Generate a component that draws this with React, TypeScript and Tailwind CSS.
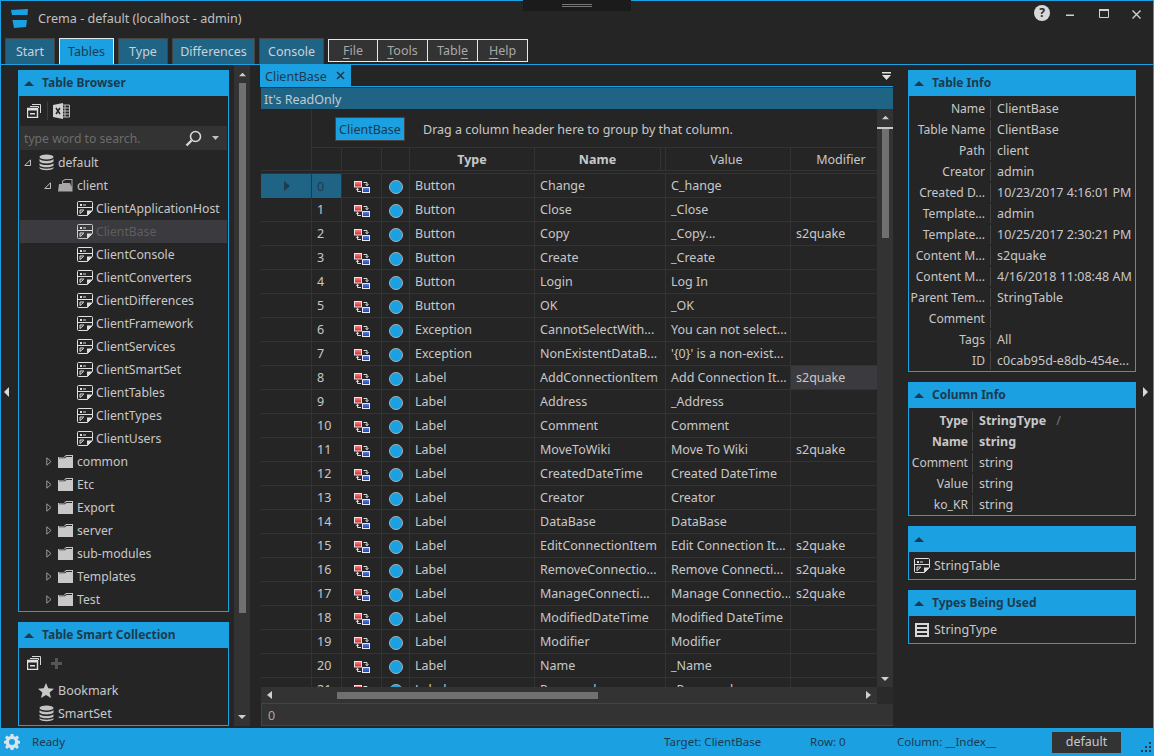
import React from "react";

const FONT = "font-['Noto_Sans','Open_Sans',sans-serif]";

const Logo = () => (
  <svg width="18" height="20" viewBox="0 0 18 20" className="shrink-0">
    <path d="M0 1 L17 0 L16.5 6 L1 6 Z" fill="#1ba1e2" />
    <path d="M1.5 11 L16 11 L15 18 L3 19 Z" fill="#1ba1e2" />
  </svg>
);

const Db = () => (
  <svg width="15" height="17" viewBox="0 0 15 17" className="shrink-0">
    <ellipse cx="7.5" cy="3" rx="7" ry="2.6" fill="#c4c4c4" />
    <path d="M0.5 5 C2 7.6 13 7.6 14.5 5 V7.5 C13 10 2 10 0.5 7.5 Z" fill="#c4c4c4" />
    <path d="M0.5 9.2 C2 11.6 13 11.6 14.5 9.2 V11.4 C13 13.8 2 13.8 0.5 11.4 Z" fill="#c4c4c4" />
    <path d="M0.5 13 C2 15.2 13 15.2 14.5 13 V14.2 C13 16.8 2 16.8 0.5 14.2 Z" fill="#c4c4c4" />
  </svg>
);

const FolderClosed = () => (
  <svg width="15" height="13" viewBox="0 0 15 13" className="shrink-0">
    <path d="M0 2 H6 L8 0 H15 V13 H0 Z" fill="#c8c8c8" />
    <path d="M1 2.6 H6.4 L8.4 1 H14 V2 H8.4 L7 3.2 H1 Z" fill="#252526" />
  </svg>
);

const FolderOpen = () => (
  <svg width="15" height="13" viewBox="0 0 15 13" className="shrink-0">
    <path d="M4 2 L7 0 H14.5 V12.5 H0 L1 5 H4 Z" fill="#a8a8a8" />
    <path d="M5 2.4 L7.3 1 H13.5 V8 L12 4 H5 Z" fill="#252526" />
  </svg>
);

const TableIcon = ({ dim = false }: { dim?: boolean }) => (
  <svg width="16" height="15" viewBox="0 0 16 15" className="shrink-0">
    <path d="M1.5 0.5 H14.5 Q15.5 0.5 15.5 1.5 V9.5 L10.5 14.5 H1.5 Q0.5 14.5 0.5 13.5 V1.5 Q0.5 0.5 1.5 0.5 Z" fill="none" stroke={dim ? "#c8c8c8" : "#e0e0e0"} />
    <path d="M3 3 H5 V5 H3 Z M6 3.5 H9 V4.5 H6 Z" fill="#e0e0e0" />
    <path d="M1 6.5 H15" stroke="#e0e0e0" />
    <path d="M3 9 H7 M3 9 V12.5 M3 12.5 L6.5 9.5" stroke="#e0e0e0" fill="none" />
    <path d="M10 14.5 L15.5 9.5 H10 Z" fill="#e0e0e0" />
  </svg>
);

const ExpandOpen = () => (
  <svg width="7" height="7" viewBox="0 0 7 7" className="shrink-0">
    <path d="M6.5 0.8 V6.5 H0.8 Z" fill="none" stroke="#c0c0c0" />
  </svg>
);

const ExpandClosed = () => (
  <svg width="6" height="9" viewBox="0 0 6 9" className="shrink-0">
    <path d="M0.8 0.8 L5 4.5 L0.8 8.2 Z" fill="none" stroke="#9a9a9a" />
  </svg>
);

const Up = ({ dark = false, w = 10 }: { dark?: boolean; w?: number }) => (
  <svg width={w} height="5" viewBox="0 0 10 5" className="shrink-0">
    <path d="M5 0 L10 5 H0 Z" fill={dark ? "#1d3a4e" : "#d0d0d0"} />
  </svg>
);

const Down = () => (
  <svg width="8" height="4" viewBox="0 0 8 4" className="shrink-0">
    <path d="M0 0 H8 L4 4 Z" fill="#d0d0d0" />
  </svg>
);

const CopyIcon = () => (
  <svg width="14" height="14" viewBox="0 0 14 14" className="shrink-0">
    <path d="M5 0.5 H13.5 V9 M3 2.5 H11.5 V4" fill="none" stroke="#d8d8d8" />
    <path d="M0.5 4.5 H10.5 V13.5 H0.5 Z" fill="none" stroke="#e0e0e0" strokeWidth="1.4" />
    <path d="M0 4 H11 V6.5 H0 Z" fill="#e0e0e0" />
    <path d="M3 9 H8 V10.5 H3 Z" fill="#e0e0e0" />
  </svg>
);

const ExcelIcon = () => (
  <svg width="17" height="16" viewBox="0 0 17 16" className="shrink-0">
    <path d="M8 2 H16.5 V14 H8 Z" fill="none" stroke="#bdbdbd" />
    <path d="M9 5 H16 M9 8 H16 M9 11 H16 M12 2 V14" stroke="#bdbdbd" />
    <path d="M0 2 L10 0 V16 L0 14 Z" fill="#d0d0d0" />
    <path d="M3 5 L7 11 M7 5 L3 11" stroke="#252526" strokeWidth="1.5" />
  </svg>
);

const SearchIcon = () => (
  <svg width="17" height="17" viewBox="0 0 17 17" className="shrink-0">
    <circle cx="10.5" cy="6.5" r="5" fill="none" stroke="#d8d8d8" strokeWidth="1.6" />
    <path d="M6.5 10.5 L1.5 15.5" stroke="#d8d8d8" strokeWidth="2.4" />
  </svg>
);

const StarIcon = () => (
  <svg width="16" height="15" viewBox="0 0 16 15" className="shrink-0">
    <path d="M8 0 L10.2 5.2 L16 5.7 L11.6 9.4 L13 15 L8 12 L3 15 L4.4 9.4 L0 5.7 L5.8 5.2 Z" fill="#c8c8c8" />
  </svg>
);

const ListIcon = () => (
  <svg width="14" height="14" viewBox="0 0 14 14" className="shrink-0">
    <path d="M0 0 H14 V14 H0 Z M2 2 V4 H12 V2 Z M2 6 V8 H12 V6 Z M2 10 V12 H12 V10 Z" fill="#d8d8d8" fillRule="evenodd" />
  </svg>
);

const Gear = () => (
  <svg width="16" height="16" viewBox="0 0 16 16" className="shrink-0">
    <path
      fillRule="evenodd"
      fill="#d6e4ec"
      d="M6.6 0 H9.4 L9.8 2.2 L11.3 2.8 L13.1 1.5 L15 3.4 L13.6 5.2 L14.2 6.6 L16 7 V9.4 L14.2 9.8 L13.6 11.3 L14.9 13.1 L13 15 L11.2 13.6 L9.8 14.2 L9.4 16 H6.6 L6.2 14.2 L4.8 13.6 L3 15 L1.1 13.1 L2.4 11.3 L1.8 9.8 L0 9.4 V7 L1.8 6.6 L2.4 5.2 L1 3.4 L2.9 1.5 L4.7 2.8 L6.2 2.2 Z M8 5 A3 3 0 1 0 8 11 A3 3 0 1 0 8 5 Z"
    />
  </svg>
);

const ChangeIcon = () => (
  <svg width="16" height="12" viewBox="0 0 16 12" className="shrink-0">
    <defs>
      <linearGradient id="r" x1="0" y1="0" x2="0" y2="1">
        <stop offset="0" stopColor="#f58a8a" />
        <stop offset="1" stopColor="#d8202a" />
      </linearGradient>
      <linearGradient id="b" x1="0" y1="0" x2="0" y2="1">
        <stop offset="0" stopColor="#5a86e0" />
        <stop offset="1" stopColor="#1f3fb8" />
      </linearGradient>
    </defs>
    <rect x="0.5" y="0.5" width="7" height="5.5" fill="url(#r)" stroke="#e8e8e8" />
    <rect x="8.5" y="6.5" width="7" height="5" fill="url(#b)" stroke="#e8e8e8" />
    <path d="M9.5 1.5 H13 V4.5 M11.6 3.2 L13 4.8 L14.4 3.2" fill="none" stroke="#e0e0e0" />
    <path d="M7 10.5 H3.5 V7.5 M2.1 8.8 L3.5 7.2 L4.9 8.8" fill="none" stroke="#e0e0e0" />
  </svg>
);

const Panel = ({ title, children, className = "" }: { title: string; children: React.ReactNode; className?: string }) => (
  <section className={`border border-[#1ba1e2] flex flex-col shrink-0 ${className}`}>
    <div className="h-[26px] -mt-px -mx-px bg-[#1ba1e2] flex items-center pl-[6px] gap-[8px] shrink-0">
      <Up dark />
      <span className="font-bold text-[#1d3a4e] text-[12px]">{title}</span>
    </div>
    {children}
  </section>
);

const TreeItem = ({
  indent,
  expW = 12,
  exp,
  icon,
  label,
  selected,
}: {
  indent: number;
  expW?: number;
  exp?: React.ReactNode;
  icon: React.ReactNode;
  label: string;
  selected?: boolean;
}) => (
  <div
    className={`h-[23px] flex items-center ${selected ? "bg-[#3a3a3f] text-[#5e5e5e]" : ""}`}
    style={{ paddingLeft: indent }}
  >
    <span className="shrink-0 flex items-center" style={{ width: expW }}>{exp}</span>
    <span className="w-[19px] shrink-0 flex items-center">{icon}</span>
    <span className="whitespace-nowrap pt-[2px] text-[12.2px]">{label}</span>
  </div>
);

const tableNames = [
  "ClientApplicationHost",
  "ClientBase",
  "ClientConsole",
  "ClientConverters",
  "ClientDifferences",
  "ClientFramework",
  "ClientServices",
  "ClientSmartSet",
  "ClientTables",
  "ClientTypes",
  "ClientUsers",
];
const folders = ["common", "Etc", "Export", "server", "sub-modules", "Templates", "Test"];

const rows: [string, string, string, string][] = [
  ["Button", "Change", "C_hange", ""],
  ["Button", "Close", "_Close", ""],
  ["Button", "Copy", "_Copy...", "s2quake"],
  ["Button", "Create", "_Create", ""],
  ["Button", "Login", "Log In", ""],
  ["Button", "OK", "_OK", ""],
  ["Exception", "CannotSelectWith...", "You can not select...", ""],
  ["Exception", "NonExistentDataB...", "'{0}' is a non-exist...", ""],
  ["Label", "AddConnectionItem", "Add Connection It...", "s2quake"],
  ["Label", "Address", "_Address", ""],
  ["Label", "Comment", "Comment", ""],
  ["Label", "MoveToWiki", "Move To Wiki", "s2quake"],
  ["Label", "CreatedDateTime", "Created DateTime", ""],
  ["Label", "Creator", "Creator", ""],
  ["Label", "DataBase", "DataBase", ""],
  ["Label", "EditConnectionItem", "Edit Connection It...", "s2quake"],
  ["Label", "RemoveConnectio...", "Remove Connecti...", "s2quake"],
  ["Label", "ManageConnecti...", "Manage Connectio...", "s2quake"],
  ["Label", "ModifiedDateTime", "Modified DateTime", ""],
  ["Label", "Modifier", "Modifier", ""],
  ["Label", "Name", "_Name", ""],
  ["Label", "Password", "_Password", ""],
];

const tableInfo: [string, string][] = [
  ["Name", "ClientBase"],
  ["Table Name", "ClientBase"],
  ["Path", "client"],
  ["Creator", "admin"],
  ["Created D...", "10/23/2017 4:16:01 PM"],
  ["Template...", "admin"],
  ["Template...", "10/25/2017 2:30:21 PM"],
  ["Content M...", "s2quake"],
  ["Content M...", "4/16/2018 11:08:48 AM"],
  ["Parent Tem...", "StringTable"],
  ["Comment", ""],
  ["Tags", "All"],
  ["ID", "c0cab95d-e8db-454e..."],
];

const columnInfo: [string, string, boolean][] = [
  ["Type", "StringType", true],
  ["Name", "string", true],
  ["Comment", "string", false],
  ["Value", "string", false],
  ["ko_KR", "string", false],
];

const Underlined = ({ pre, u, post }: { pre: string; u: string; post: string }) => (
  <span className="whitespace-nowrap">
    {pre}
    <span className="underline underline-offset-[3px]">{u}</span>
    {post}
  </span>
);

export default function App() {
  return (
    <div className={`${FONT} relative w-[1154px] h-[756px] overflow-hidden bg-[#252526] text-[12.5px] leading-none text-[#c8c8c8] flex flex-col`}>
      <div className="absolute left-[523px] top-0 w-[108px] h-[11px] bg-[#1b1b1b] flex flex-col items-center pt-[4px] gap-px z-10">
        <div className="w-[30px] h-px bg-[#777]" />
        <div className="w-[30px] h-px bg-[#777]" />
      </div>

      <div className="h-px bg-[#1ba1e2] shrink-0" />

      <div className="flex-1 min-h-0 flex flex-col border-x border-[#1ba1e2]">
        {/* title bar */}
        <header className="h-[37px] shrink-0 flex items-center pl-[10px]">
          <span className="mb-[2px]"><Logo /></span>
          <span className="ml-[9px] text-[12.6px] text-[#c0c0c0] whitespace-nowrap">Crema - default (localhost - admin)</span>
          <div className="ml-auto flex items-start self-start mt-[4px] mr-[12px]">
            <span className="w-[16px] h-[16px] rounded-full bg-[#d8d8d8] text-[#2a2a2a] text-[12px] font-bold flex items-center justify-center">?</span>
            <svg width="9" height="9" viewBox="0 0 9 9" className="ml-[16px] mt-[2px]"><path d="M0 7.5 H8 V9 H0 Z" fill="#d0d0d0" /></svg>
            <svg width="10" height="9" viewBox="0 0 10 9" className="ml-[24px] mt-[4px]"><path d="M0.5 1 H9.5 V8.5 H0.5 Z" fill="none" stroke="#d0d0d0" /><path d="M0 0 H10 V2 H0 Z" fill="#d0d0d0" /></svg>
            <svg width="9" height="9" viewBox="0 0 9 9" className="ml-[23px] mt-[5px]"><path d="M0.5 0.5 L8.5 8.5 M8.5 0.5 L0.5 8.5" stroke="#d0d0d0" strokeWidth="1.4" /></svg>
          </div>
        </header>

        {/* tabs + menu */}
        <nav className="h-[26px] shrink-0 flex pl-[4px] gap-[4px]">
          {[
            ["Start", "w-[50px]"],
            ["Tables", "w-[55px]"],
            ["Type", "w-[50px]"],
            ["Differences", "w-[83px]"],
            ["Console", "w-[65px]"],
          ].map(([t, w]) => (
            <div
              key={t}
              className={`${w} shrink-0 flex items-center justify-center text-[12.5px] pt-[2px] border-x border-t ${
                t === "Tables"
                  ? "bg-[#1ba1e2] border-[#dfe8ec] text-[#1d3a4e]"
                  : "bg-[#206485] border-[#444] text-[#c8d2d8]"
              }`}
            >
              {t}
            </div>
          ))}
          <div className="flex h-[23px] mt-px">
            {[
              ["", "F", "ile"],
              ["", "T", "ools"],
              ["Tabl", "e", ""],
              ["", "H", "elp"],
            ].map(([a, b, c], i) => (
              <div
                key={b}
                className={`w-[50px] bg-[#333] border-y border-r border-[#e8e8e8] flex items-center justify-center pt-[2px] text-[#a8a8a8] ${i === 0 ? "border-l" : ""}`}
              >
                <Underlined pre={a} u={b} post={c} />
              </div>
            ))}
          </div>
        </nav>
        <div className="h-px bg-[#1ba1e2] shrink-0" />

        {/* main */}
        <main className="flex-1 min-h-0 flex">
          <div className="w-[17px] shrink-0 flex items-center pl-[3px] pb-[10px]">
            <svg width="5" height="10" viewBox="0 0 5 10"><path d="M5 0 V10 L0 5 Z" fill="#d8d8d8" /></svg>
          </div>

          {/* left column */}
          <aside className="w-[211px] shrink-0 pt-[5px] flex flex-col gap-[10px]">
            <Panel title="Table Browser" className="h-[542px]">
              <div className="h-[30px] flex items-center pl-[8px] shrink-0">
                <CopyIcon />
                <div className="w-px h-[18px] bg-[#3d3d3d] ml-[6px] mr-[5px]" />
                <ExcelIcon />
              </div>
              <div className="h-[24px] bg-[#333] mx-px flex items-center pl-[4px] pr-[8px] shrink-0 text-[#6c6c6c]">
                <span className="text-[12.2px] pt-[2px]">type word to search.</span>
                <span className="ml-auto"><SearchIcon /></span>
                <span className="ml-[10px]"><svg width="7" height="4" viewBox="0 0 7 4"><path d="M0 0 H7 L3.5 4 Z" fill="#c0c0c0" /></svg></span>
              </div>
              <div className="mx-px pt-[1px]">
                <TreeItem indent={4} expW={15} exp={<ExpandOpen />} icon={<Db />} label="default" />
                <TreeItem indent={24} expW={14} exp={<ExpandOpen />} icon={<FolderOpen />} label="client" />
                {tableNames.map((n) => (
                  <TreeItem key={n} indent={45} icon={<TableIcon dim={n === "ClientBase"} />} label={n} selected={n === "ClientBase"} />
                ))}
                {folders.map((n) => (
                  <TreeItem key={n} indent={26} exp={<ExpandClosed />} icon={<FolderClosed />} label={n} />
                ))}
              </div>
            </Panel>
            <Panel title="Table Smart Collection" className="h-[104px]">
              <div className="h-[30px] flex items-center pl-[8px] shrink-0">
                <CopyIcon />
                <svg width="11" height="11" viewBox="0 0 11 11" className="ml-[10px]"><path d="M4 0 H7 V4 H11 V7 H7 V11 H4 V7 H0 V4 H4 Z" fill="#555" /></svg>
              </div>
              <div className="h-[23px] flex items-center pl-[19px] gap-[4px] mt-[1px]"><StarIcon /><span className="pt-[2px]">Bookmark</span></div>
              <div className="h-[23px] flex items-center pl-[20px] gap-[4px]"><Db /><span className="pt-[2px]">SmartSet</span></div>
            </Panel>
          </aside>

          {/* left scrollbar */}
          <div className="w-[16px] ml-[5px] mb-[2px] shrink-0 bg-[#333] flex flex-col items-center pt-[7px] pb-[7px]">
            <Up w={7} />
            <div className="w-[7px] h-[530px] mt-[6px] bg-[#707070] " />
            <div className="mt-auto"><Down /></div>
          </div>

          {/* center */}
          <section className="w-[633px] ml-[10px] shrink-0 flex flex-col pb-[2px]">
            <div className="h-[21px] flex shrink-0 relative">
              <div className="w-[91px] bg-[#1ba1e2] flex items-center pl-[5px] text-[#1d3a4e] shrink-0">
                <span className="pt-[3px]">ClientBase</span>
                <svg width="9" height="9" viewBox="0 0 9 9" className="ml-[9px]"><path d="M1 1 L8 8 M8 1 L1 8" stroke="#1d3a4e" strokeWidth="1.6" /></svg>
              </div>
              <div className="ml-auto mr-[2px] mt-[7px]">
                <svg width="9" height="9" viewBox="0 0 9 9" className="block"><path d="M0 0 H9 V1.5 H0 Z M0 3 H9 L4.5 8 Z" fill="#e0e0e0" /></svg>
              </div>
            </div>
            <div className="h-px bg-[#1ba1e2] shrink-0" />
            <div className="ml-px flex-1 min-h-0 flex flex-col border-t border-[#333]">
              <div className="h-[21px] bg-[#206485] flex items-center pl-[3px] pt-[3px] text-[#c0ccd2] shrink-0">It's ReadOnly</div>
              <div className="flex-1 min-h-0 flex">
                {/* grid */}
                <div className="w-[616px] shrink-0 flex flex-col min-h-0">
                  <div className="h-[39px] ml-[50px] border-l border-b border-[#333] shrink-0 flex items-center pl-[23px] pt-[2px]">
                    <div className="h-[24px] w-[70px] bg-[#1ba1e2] border border-[#444] flex items-center justify-center pt-[2px] text-[#1d3a4e] shrink-0">ClientBase</div>
                    <span className="ml-[18px] whitespace-nowrap pt-[2px]">Drag a column header here to group by that column.</span>
                  </div>
                  <div className="h-[23px] shrink-0 grid grid-cols-[50px_30px_40px_28px_125px_126px_5px_125px_87px] border-b border-[#333]">
                    <div />
                    <div className="border-l border-[#333]" />
                    <div className="border-l border-[#333]" />
                    <div className="border-l border-[#333]" />
                    <div className="border-l border-[#333] flex items-center justify-center pt-[2px] font-bold text-[12.5px]">Type</div>
                    <div className="border-l border-[#333] flex items-center justify-center pt-[2px] font-bold text-[12.5px]">Name</div>
                    <div className="border-l border-[#333]" />
                    <div className="border-l border-[#333] flex items-center justify-center pt-[2px] pr-[3px]">Value</div>
                    <div className="border-l border-[#333] flex items-center justify-center pt-[2px] pl-[14px]">Modifier</div>
                  </div>
                  <div className="h-[3px] shrink-0 border-b border-[#333]" />
                  <div className="flex-1 min-h-0 overflow-hidden">
                    {rows.map((r, i) => (
                      <div key={i} className="h-[24px] grid grid-cols-[50px_30px_40px_28px_125px_131px_125px_87px]">
                        <div className={`flex items-center justify-center pl-[2px] ${i === 0 ? "bg-[#206485]" : "border-b border-[#333]"}`}>
                          {i === 0 && (
                            <svg width="6" height="10" viewBox="0 0 6 10"><path d="M0 0 L6 5 L0 10 Z" fill="#1d3a4e" /></svg>
                          )}
                        </div>
                        <div className={`border-l border-[#333] flex items-center pl-[5px] pt-[2px] ${i === 0 ? "bg-[#206485] text-[#1d3a4e]" : "border-b"}`}>{i}</div>
                        <div className="border-l border-b border-[#333] flex items-center justify-center pt-[2px]"><ChangeIcon /></div>
                        <div className="border-l border-b border-[#333] flex items-center justify-center pl-px pt-[2px]">
                          <span className="w-[14px] h-[14px] rounded-full bg-[#1ba1e2] border border-[#b0b0b0]" />
                        </div>
                        {r.map((c, j) => (
                          <div
                            key={j}
                            className={`border-l border-b border-[#333] flex items-center pl-[5px] pt-[2px] whitespace-nowrap overflow-hidden ${j === 3 && i === 8 ? "bg-[#3a3a3f]" : ""}`}
                          >
                            {c}
                          </div>
                        ))}
                      </div>
                    ))}
                  </div>
                  {/* horizontal scrollbar */}
                  <div className="h-[17px] shrink-0 bg-[#333] flex items-center pl-[6px] pr-[6px] border-b border-[#444]">
                    <svg width="5" height="8" viewBox="0 0 5 8"><path d="M5 0 V8 L0 4 Z" fill="#d0d0d0" /></svg>
                    <div className="ml-[65px] w-[261px] h-[7px] bg-[#707070]" />
                    <svg width="5" height="8" viewBox="0 0 5 8" className="ml-auto"><path d="M0 0 V8 L5 4 Z" fill="#d0d0d0" /></svg>
                  </div>
                </div>
                {/* vertical scrollbar */}
                <div className="w-[16px] shrink-0 bg-[#333] flex flex-col items-center pt-[6px]">
                  <Up w={7} />
                  <div className="w-full h-[2px] bg-[#c8c8c8] mt-[7px]" />
                  <div className="w-[7px] h-[109px] bg-[#707070]" />
                  <div className="mt-auto mb-[6px]"><Down /></div>
                  <div className="h-[17px] w-full bg-[#2a2a2a]" />
                </div>
              </div>
              <div className="h-[22px] shrink-0 bg-[#333] flex items-center pl-[6px] pt-[4px] text-[#a8a8a8] border-l border-b border-[#444]">0</div>
            </div>
          </section>

          {/* right column */}
          <aside className="w-[228px] ml-[15px] shrink-0 pt-[5px] flex flex-col gap-[10px]">
            <Panel title="Table Info" className="h-[302px]">
              <div className="pt-[2px]">
                {tableInfo.map(([k, v], i) => (
                  <div key={i} className="h-[21px] grid grid-cols-[82px_1fr] items-center">
                    <div className="h-[19px] flex items-center justify-end pr-[5px] pt-[2px] text-[12.1px] border-r border-[#444] whitespace-nowrap overflow-hidden">{k}</div>
                    <div className="pl-[6px] pt-[2px] whitespace-nowrap overflow-hidden">{v}</div>
                  </div>
                ))}
              </div>
            </Panel>
            <Panel title="Column Info" className="h-[134px]">
              <div className="pt-[2px]">
                {columnInfo.map(([k, v, b], i) => (
                  <div key={i} className={`h-[21px] grid grid-cols-[64px_1fr] items-center ${b ? "font-bold" : ""}`}>
                    <div className="h-[19px] flex items-center justify-end pr-[4px] pt-[2px] text-[12.1px] border-r border-[#444] whitespace-nowrap">{k}</div>
                    <div className="pl-[6px] pt-[2px] flex items-center whitespace-nowrap">
                      {v}
                      {i === 0 && <span className="font-normal ml-[10px] text-[#777]">/</span>}
                    </div>
                  </div>
                ))}
              </div>
            </Panel>
            <Panel title="" className="h-[54px]">
              <div className="flex-1 flex items-center pl-[5px] gap-[4px]"><TableIcon /><span className="pt-[2px]">StringTable</span></div>
            </Panel>
            <Panel title="Types Being Used" className="h-[54px]">
              <div className="flex-1 flex items-center pl-[6px] gap-[5px]"><ListIcon /><span className="pt-[2px]">StringType</span></div>
            </Panel>
          </aside>

          <div className="flex-1 flex items-center pl-[7px] pb-[10px]">
            <svg width="5" height="10" viewBox="0 0 5 10"><path d="M0 0 V10 L5 5 Z" fill="#d8d8d8" /></svg>
          </div>
        </main>
      </div>

      {/* status bar */}
      <footer className="h-[28px] shrink-0 bg-[#1ba1e2] flex items-center relative text-[11.5px] text-[#1d3a4e]">
        <span className="ml-[4px]"><Gear /></span>
        <span className="ml-[12px]">Ready</span>
        <span className="ml-[599px] w-[146px]">Target: ClientBase</span>
        <span className="w-[87px]">Row: 0</span>
        <span className="w-[155px]">Column: __Index__</span>
        <div className="w-[69px] h-[21px] bg-[#333] text-[12.5px] text-[#c8c8c8] flex items-center justify-center">default</div>
        <svg width="12" height="12" viewBox="0 0 12 12" className="absolute right-[2px] bottom-[2px]">
          <path d="M9 0 H11 V2 H9 Z M5 4 H7 V6 H5 Z M9 4 H11 V6 H9 Z M1 8 H3 V10 H1 Z M5 8 H7 V10 H5 Z M9 8 H11 V10 H9 Z" fill="#1d3a4e" />
        </svg>
      </footer>
    </div>
  );
}
